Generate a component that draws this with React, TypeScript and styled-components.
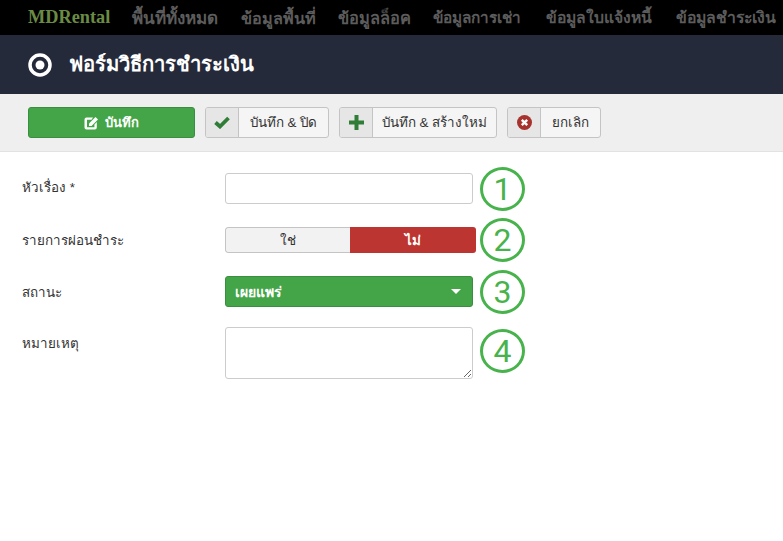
import React from "react";
import styled, { createGlobalStyle } from "styled-components";

const Global = createGlobalStyle`
  html, body { margin: 0; padding: 0; background: #fff; }
  body { font-family: Tahoma, "Liberation Sans", "Noto Sans", "DejaVu Sans", sans-serif; }
`;
const Page = styled.div`width: 783px; height: 541px; overflow: hidden; background: #fff;`;
const Nav = styled.nav`
  height: 35px; background: #000; display: flex; align-items: center; white-space: nowrap;
  padding-left: 28px;
`;
const Brand = styled.span`
  font-family: "Liberation Serif", serif; font-weight: 700; font-size: 18.3px; color: #6b8b45; width: 104px; flex: none;
`;
const NavLink = styled.span<{ $w: number; $size: number }>`
  font-size: ${p => p.$size}px; font-weight: 700; color: #5c5c5c; width: ${p => p.$w}px; flex: none;
`;
const TitleBar = styled.header`
  height: 59px; background: #252a3a; display: flex; align-items: center; padding-left: 28px; gap: 17px;
`;
const Title = styled.h1`margin: -2px 0 0; font-size: 20.2px; font-weight: 700; color: #fff;`;
const Toolbar = styled.div`
  height: 58px; box-sizing: border-box; background: #efefef; border-bottom: 1px solid #e2e2e2;
  display: flex; gap: 10px; padding: 13px 0 0 28px;
`;
const SaveButton = styled.button`
  width: 167px; height: 31px; box-sizing: border-box; background: #43a548; border: 1px solid #3a8f3f; border-radius: 3px;
  color: #fff; font: 700 13px Tahoma, "Liberation Sans", sans-serif; display: flex; align-items: center; justify-content: center; gap: 6px; padding: 0;
`;
const Button = styled.button<{ $w: number }>`
  width: ${p => p.$w}px; height: 31px; box-sizing: border-box; background: #f5f5f5; border: 1px solid #c4c4c4; border-radius: 3px;
  display: flex; align-items: stretch; padding: 0; color: #333; font: 13.4px Tahoma, "Liberation Sans", sans-serif; overflow: hidden;
`;
const IconCell = styled.span`
  width: 32px; flex: none; background: #e6e6e6; border-right: 1px solid #c4c4c4; display: flex; align-items: center; justify-content: center;
`;
const ButtonLabel = styled.span`flex: 1; display: flex; align-items: center; justify-content: center;`;
const Form = styled.form`
  display: flex; flex-direction: column; padding: 15px 0 0 22px;
`;
const Row = styled.div<{ $h?: number; $after?: number }>`
  display: flex; align-items: center; height: ${p => p.$h ?? 44}px; margin-bottom: ${p => p.$after ?? 0}px;
`;
const Label = styled.label<{ $nudge?: number; $top?: number }>`
  width: 203px; flex: none; font-size: 13.4px; color: #333; margin-top: ${p => p.$nudge ?? 0}px;
  ${p => (p.$top !== undefined ? `align-self: flex-start; margin-top: 0; padding-top: ${p.$top}px;` : "")}
`;
const Input = styled.input`
  width: 248px; height: 31px; box-sizing: border-box; border: 1px solid #ccc; border-radius: 3px; background: #fff; padding: 0; margin: 0 7px 1px 0; flex: none;
`;
const Toggle = styled.div`
  width: 251px; height: 26px; display: flex; border-radius: 3px; overflow: hidden; font-size: 13.4px; margin-right: 4px; flex: none;
`;
const ToggleOption = styled.div<{ $active?: boolean }>`
  width: ${p => (p.$active ? 126 : 125)}px; display: flex; align-items: center; justify-content: center; box-sizing: border-box;
  background: ${p => (p.$active ? "#bd3530" : "#f2f2f2")};
  color: ${p => (p.$active ? "#fff" : "#333")};
  font-weight: ${p => (p.$active ? 700 : 400)};
  border: ${p => (p.$active ? "none" : "1px solid #c4c4c4")};
  border-right: none;
  border-radius: ${p => (p.$active ? "0" : "3px 0 0 3px")};
`;
const Select = styled.div`
  width: 248px; height: 31px; box-sizing: border-box; background: #43a548; border: 1px solid #3a8f3f; border-radius: 3px; margin: 0 7px 1px 0; flex: none;
  color: #fff; font-size: 14px; font-weight: 700; display: flex; align-items: center; justify-content: space-between; padding: 0 11px 0 9px;
`;
const Caret = styled.span`width: 0; height: 0; border-left: 5px solid transparent; border-right: 5px solid transparent; border-top: 5px solid #fff;`;
const TextArea = styled.textarea`
  width: 248px; height: 52px; box-sizing: border-box; margin: 0 7px 0 0; border: 1px solid #ccc; border-radius: 3px; padding: 0; display: block; flex: none;
`;
const Circle = styled.span<{ $lift?: number }>`
  width: 45px; height: 44px; box-sizing: border-box; flex: none; border: 3px solid #48b34c; border-radius: 50%;
  color: #48b34c; font: 400 32px/38px Roboto, "Liberation Sans", sans-serif; text-align: center;
  margin-top: ${p => -(p.$lift ?? 0)}px;
`;

const Check = () => (
  <svg width="16" height="13" viewBox="0 0 16 13"><path d="M1.500 6.500 L6 10.500 L14.500 2" fill="none" stroke="#2f7d36" strokeWidth="3.800" /></svg>
);
const Plus = () => (
  <svg width="15" height="15" viewBox="0 0 15 15"><path d="M5.500 0h4v5.500h5.500v4H9.500V15h-4V9.500H0v-4h5.500z" fill="#2f7d36" /></svg>
);
const Cancel = () => (
  <svg width="15" height="15" viewBox="0 0 15 15"><circle cx="7.500" cy="7.500" r="7.500" fill="#a6332e" /><path d="M4.800 4.800l5.400 5.400M10.200 4.800l-5.400 5.400" stroke="#fff" strokeWidth="2.400" /></svg>
);
const Edit = () => (
  <svg width="15" height="14" viewBox="0 0 15 14">
    <path d="M2.500 1.500H9L7.500 3.800H3v7.400h7.400V8.500L12.800 6v5.500a2 2 0 0 1-2 2H2.500a2 2 0 0 1-2-2v-8a2 2 0 0 1 2-2z" fill="#fff" />
    <path d="M5 7.500 L11.500 1 L14 3.500 L7.500 10 H5z" fill="#fff" />
  </svg>
);
const Target = () => (
  <svg width="24" height="24" viewBox="0 0 24 24"><circle cx="12" cy="12" r="10" fill="none" stroke="#fff" strokeWidth="3.500" /><circle cx="12" cy="12" r="4.500" fill="#fff" /></svg>
);

const links: [string, number, number][] = [
  ["พื้นที่ทั้งหมด", 109, 17],
  ["ข้อมูลพื้นที่", 97, 16.2],
  ["ข้อมูลล็อค", 95, 16.4],
  ["ข้อมูลการเช่า", 113, 15.3],
  ["ข้อมูลใบแจ้งหนี้", 130, 15.7],
  ["ข้อมูลชำระเงิน", 100, 15.8],
];

export default function App() {
  return (
    <Page>
      <Global />
      <Nav>
        <Brand>MDRental</Brand>
        {links.map(([l, w, s]) => <NavLink key={l} $w={w} $size={s}>{l}</NavLink>)}
      </Nav>
      <TitleBar>
        <Target />
        <Title>ฟอร์มวิธีการชำระเงิน</Title>
      </TitleBar>
      <Toolbar>
        <SaveButton type="button"><Edit />บันทึก</SaveButton>
        <Button type="button" $w={124}><IconCell><Check /></IconCell><ButtonLabel>บันทึก &amp; ปิด</ButtonLabel></Button>
        <Button type="button" $w={158}><IconCell><Plus /></IconCell><ButtonLabel>บันทึก &amp; สร้างใหม่</ButtonLabel></Button>
        <Button type="button" $w={94}><IconCell><Cancel /></IconCell><ButtonLabel>ยกเลิก</ButtonLabel></Button>
      </Toolbar>
      <Form>
        <Row $after={7}>
          <Label $nudge={-3}>หัวเรื่อง *</Label>
          <Input /><Circle>1</Circle>
        </Row>
        <Row $after={8}>
          <Label $nudge={1}>รายการผ่อนชำระ</Label>
          <Toggle><ToggleOption>ใช่</ToggleOption><ToggleOption $active>ไม่</ToggleOption></Toggle>
          <Circle>2</Circle>
        </Row>
        <Row $after={13}>
          <Label $nudge={1}>สถานะ</Label>
          <Select>เผยแพร่<Caret /></Select><Circle>3</Circle>
        </Row>
        <Row $h={52}>
          <Label $top={6}>หมายเหตุ</Label>
          <TextArea /><Circle $lift={4}>4</Circle>
        </Row>
      </Form>
    </Page>
  );
}
